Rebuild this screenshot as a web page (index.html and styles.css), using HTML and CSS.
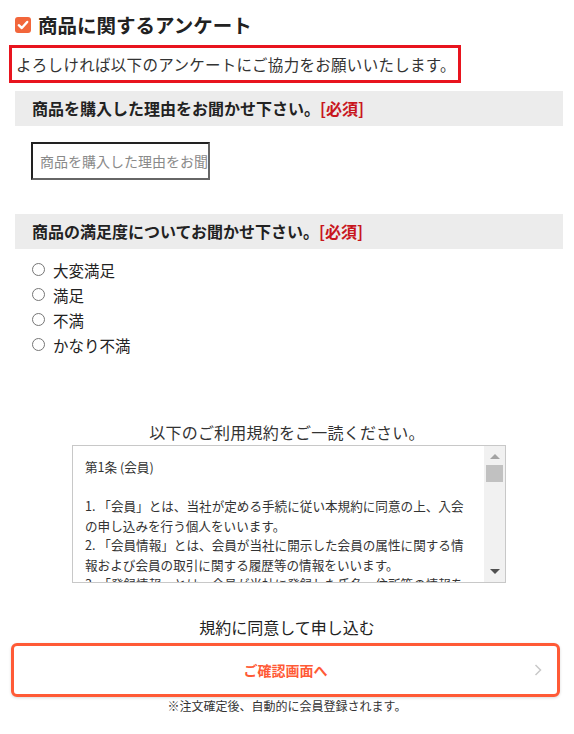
FILE: index.html
```html
<!DOCTYPE html>
<html lang="ja">
<head>
<meta charset="utf-8">
<title>商品に関するアンケート</title>
<link rel="stylesheet" href="styles.css">
</head>
<body>
<div class="page">
  <h1 class="title">
    <span class="check"><svg width="16" height="16" viewBox="0 0 16 16"><rect x="0" y="0" width="16" height="16" rx="3" fill="#f2663b"/><polyline points="3.8,8.2 6.8,11 12.2,5" fill="none" stroke="#fff" stroke-width="2.4" stroke-linecap="round" stroke-linejoin="round"/></svg></span>
    <span>商品に関するアンケート</span>
  </h1>
  <div class="lead-wrap"><p class="lead">よろしければ以下のアンケートにご協力をお願いいたします。</p></div>

  <h2 class="qhead">商品を購入した理由をお聞かせ下さい。<span class="req">[必須]</span></h2>
  <div class="field"><input class="text-in" type="text" placeholder="商品を購入した理由をお聞かせください"></div>

  <h2 class="qhead q2">商品の満足度についてお聞かせ下さい。<span class="req">[必須]</span></h2>
  <ul class="radios">
    <li><span class="radio"></span>大変満足</li>
    <li><span class="radio"></span>満足</li>
    <li><span class="radio"></span>不満</li>
    <li><span class="radio"></span>かなり不満</li>
  </ul>

  <p class="terms-title">以下のご利用規約をご一読ください。</p>
  <div class="terms">
    <div class="terms-text">
      <p>第1条 (会員)</p>
      <p>&nbsp;</p>
      <p>1. 「会員」とは、当社が定める手続に従い本規約に同意の上、入会の申し込みを行う個人をいいます。</p>
      <p>2. 「会員情報」とは、会員が当社に開示した会員の属性に関する情報および会員の取引に関する履歴等の情報をいいます。</p>
      <p>3. 「登録情報」とは、会員が当社に登録した氏名・住所等の情報をいいます。</p>
    </div>
    <div class="sbar">
      <span class="arr up"></span>
      <span class="thumb"></span>
      <span class="track"></span>
      <span class="arr down"></span>
    </div>
  </div>

  <p class="agree">規約に同意して申し込む</p>
  <button class="btn" type="button">
    <span class="btn-label">ご確認画面へ</span>
    <svg class="chev" width="8" height="12" viewBox="0 0 8 12"><polyline points="1.5,1 6.5,6 1.5,11" fill="none" stroke="#c9c9c9" stroke-width="1.5"/></svg>
  </button>
  <p class="note">※注文確定後、自動的に会員登録されます。</p>
</div>
</body>
</html>
```

FILE: styles.css
```css
* { box-sizing: border-box; }
html, body { margin: 0; padding: 0; background: #fff; }
body {
  font-family: "Noto Sans CJK JP", "Noto Sans", sans-serif;
  color: #333;
  width: 574px;
}
.page { padding: 0 0 20px 0; }
p, h1, h2, ul { margin: 0; padding: 0; }

.title {
  display: flex;
  align-items: center;
  gap: 7px;
  padding: 12px 0 0 15px;
  font-size: 19.5px;
  line-height: 26px;
  font-weight: 700;
  color: #222;
}
.check { display: flex; }
.check svg { display: block; }

.lead-wrap { padding: 7px 0 0 9px; }
.lead {
  display: inline-block;
  border: 3px solid #e8141e;
  padding: 3px 2px 3px 4px;
  font-size: 15.5px;
  letter-spacing: 0.3px;
  line-height: 26px;
  color: #333;
}

.qhead {
  margin: 8px 11px 0 15px;
  background: #ececec;
  height: 35px;
  line-height: 35px;
  padding-left: 17px;
  font-size: 16px;
  font-weight: 700;
  color: #222;
}
.qhead.q2 { margin-top: 34px; }
.req { color: #c8161d; }

.field { padding: 16px 0 0 31px; }
.text-in {
  display: block;
  width: 179px;
  height: 38px;
  border: 2px solid;
  border-color: #222 #666 #666 #222;
  padding: 0 0 0 7px;
  font-family: inherit;
  font-size: 14px;
  color: #333;
  background: #fff;
  outline: none;
}
.text-in::placeholder { color: #8a8a8a; }

.radios {
  list-style: none;
  margin-top: 8px;
  padding-left: 32px;
}
.radios li {
  display: flex;
  align-items: center;
  gap: 8px;
  height: 25px;
  font-size: 15.5px;
  color: #222;
}
.radio {
  width: 13px;
  height: 13px;
  border: 1px solid #767676;
  border-radius: 50%;
  background: #fff;
  flex: none;
}

.terms-title {
  margin-top: 63px;
  text-align: center;
  font-size: 16px;
  letter-spacing: 0.2px;
  line-height: 24px;
  color: #333;
}
.terms {
  display: flex;
  margin: 1px 0 0 72px;
  width: 434px;
  height: 138px;
  border: 1px solid #c8c8c8;
  overflow: hidden;
}
.terms-text {
  flex: 1;
  padding: 11px 14px 0 12px;
  font-size: 12.6px;
  line-height: 19.5px;
  color: #333;
  overflow: hidden;
}
.sbar {
  flex: none;
  width: 21px;
  background: #f1f1f1;
  display: flex;
  flex-direction: column;
  align-items: center;
  padding: 8px 0 8px;
}
.arr {
  width: 0; height: 0;
  border-left: 5px solid transparent;
  border-right: 5px solid transparent;
}
.arr.up { border-bottom: 5px solid #a3a3a3; }
.arr.down { border-top: 5px solid #505050; }
.thumb {
  margin-top: 6px;
  width: 17px;
  height: 17px;
  background: #c1c1c1;
}
.track { flex: 1; }

.agree {
  margin-top: 32px;
  text-align: center;
  font-size: 16px;
  line-height: 24px;
  color: #222;
}
.btn {
  margin: 4px 14px 0 11px;
  width: 549px;
  height: 54px;
  display: flex;
  align-items: center;
  justify-content: center;
  position: relative;
  border: 3px solid #ff5a36;
  border-radius: 6px;
  background: #fff;
  box-shadow: 0 1px 3px rgba(0,0,0,0.15);
  font-family: inherit;
  padding: 0;
}
.btn-label {
  font-size: 14px;
  font-weight: 700;
  color: #ff5a36;
}
.chev { position: absolute; right: 15px; top: 18px; }
.note {
  text-align: center;
  font-size: 12px;
  line-height: 18px;
  color: #333;
}
```
